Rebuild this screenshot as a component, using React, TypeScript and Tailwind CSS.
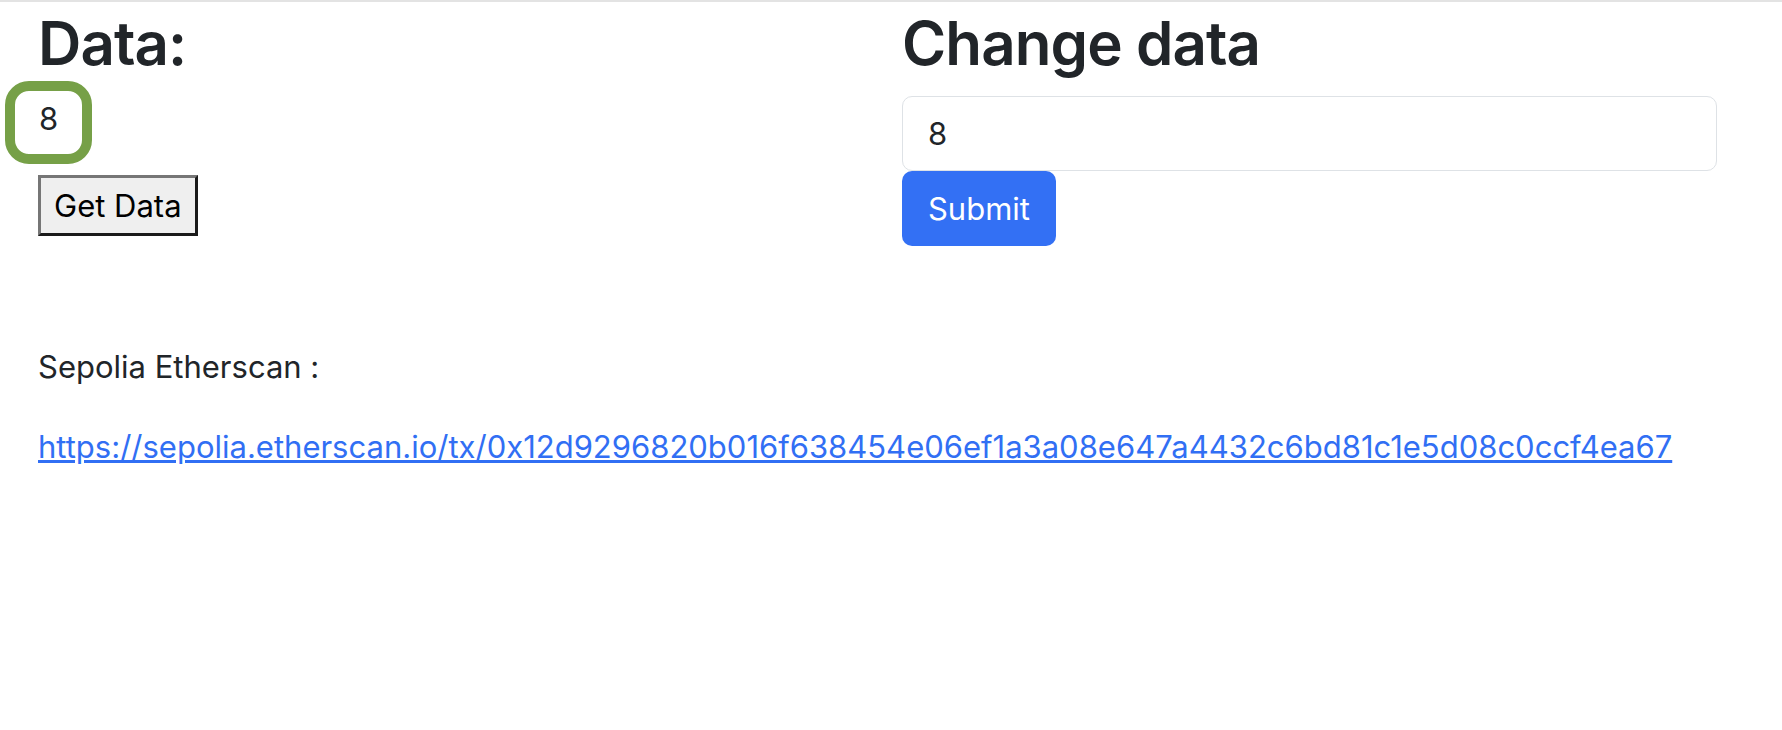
import React, { useState } from "react";

const TX_URL =
  "https://sepolia.etherscan.io/tx/0x12d9296820b016f638454e06ef1a3a08e647a4432c6bd81c1e5d08c0ccf4ea67";

export default function App() {
  const [data, setData] = useState<string>("8");
  const [value, setValue] = useState<string>("8");

  return (
    <div className="min-h-screen bg-white border-t-2 border-[#e3e3e3] font-['Inter',sans-serif] text-[#212529]">
      <div className="flex items-start">
        {/* Read side */}
        <div className="w-[902px] shrink-0 pl-[38px] flex flex-col items-start">
          <h1 className="mt-[3px] text-[60px] font-semibold leading-[76px] tracking-[-0.9px]">
            Data:
          </h1>
          <div className="-ml-[33px] w-[87px] h-[83px] border-[10px] border-[#76a047] rounded-[24px] flex justify-center pt-[8px] text-[31px] leading-[40px]">
            {data}
          </div>
          <button
            onClick={() => setData(value)}
            className="mt-[11px] h-[61px] px-[13px] bg-[#efefef] border-[3px] border-t-[#767676] border-l-[#767676] border-b-[#1a1a1a] border-r-[#1a1a1a] text-black text-[31px] leading-[40px]"
          >
            Get Data
          </button>
        </div>

        {/* Write side */}
        <div className="w-[815px] shrink-0 flex flex-col items-start">
          <h1 className="mt-[3px] text-[60px] font-semibold leading-[76px] tracking-[-0.9px]">
            Change data
          </h1>
          <input
            value={value}
            onChange={(e) => setValue(e.target.value)}
            className="mt-[15px] w-full h-[75px] border border-[#dee2e6] rounded-[10px] px-[25px] text-[31px] text-[#212529] outline-none"
          />
          <button className="w-[154px] h-[75px] bg-[#3370f4] rounded-[10px] text-white text-[31px] leading-[40px]">
            Submit
          </button>
        </div>
      </div>

      {/* Transaction */}
      <div className="pl-[38px] mt-[98px] text-[31px] leading-[45px]">
        <p>Sepolia Etherscan :</p>
        <a href={TX_URL} className="block mt-[35px] text-[#316ff4] underline">
          {TX_URL}
        </a>
      </div>
    </div>
  );
}
